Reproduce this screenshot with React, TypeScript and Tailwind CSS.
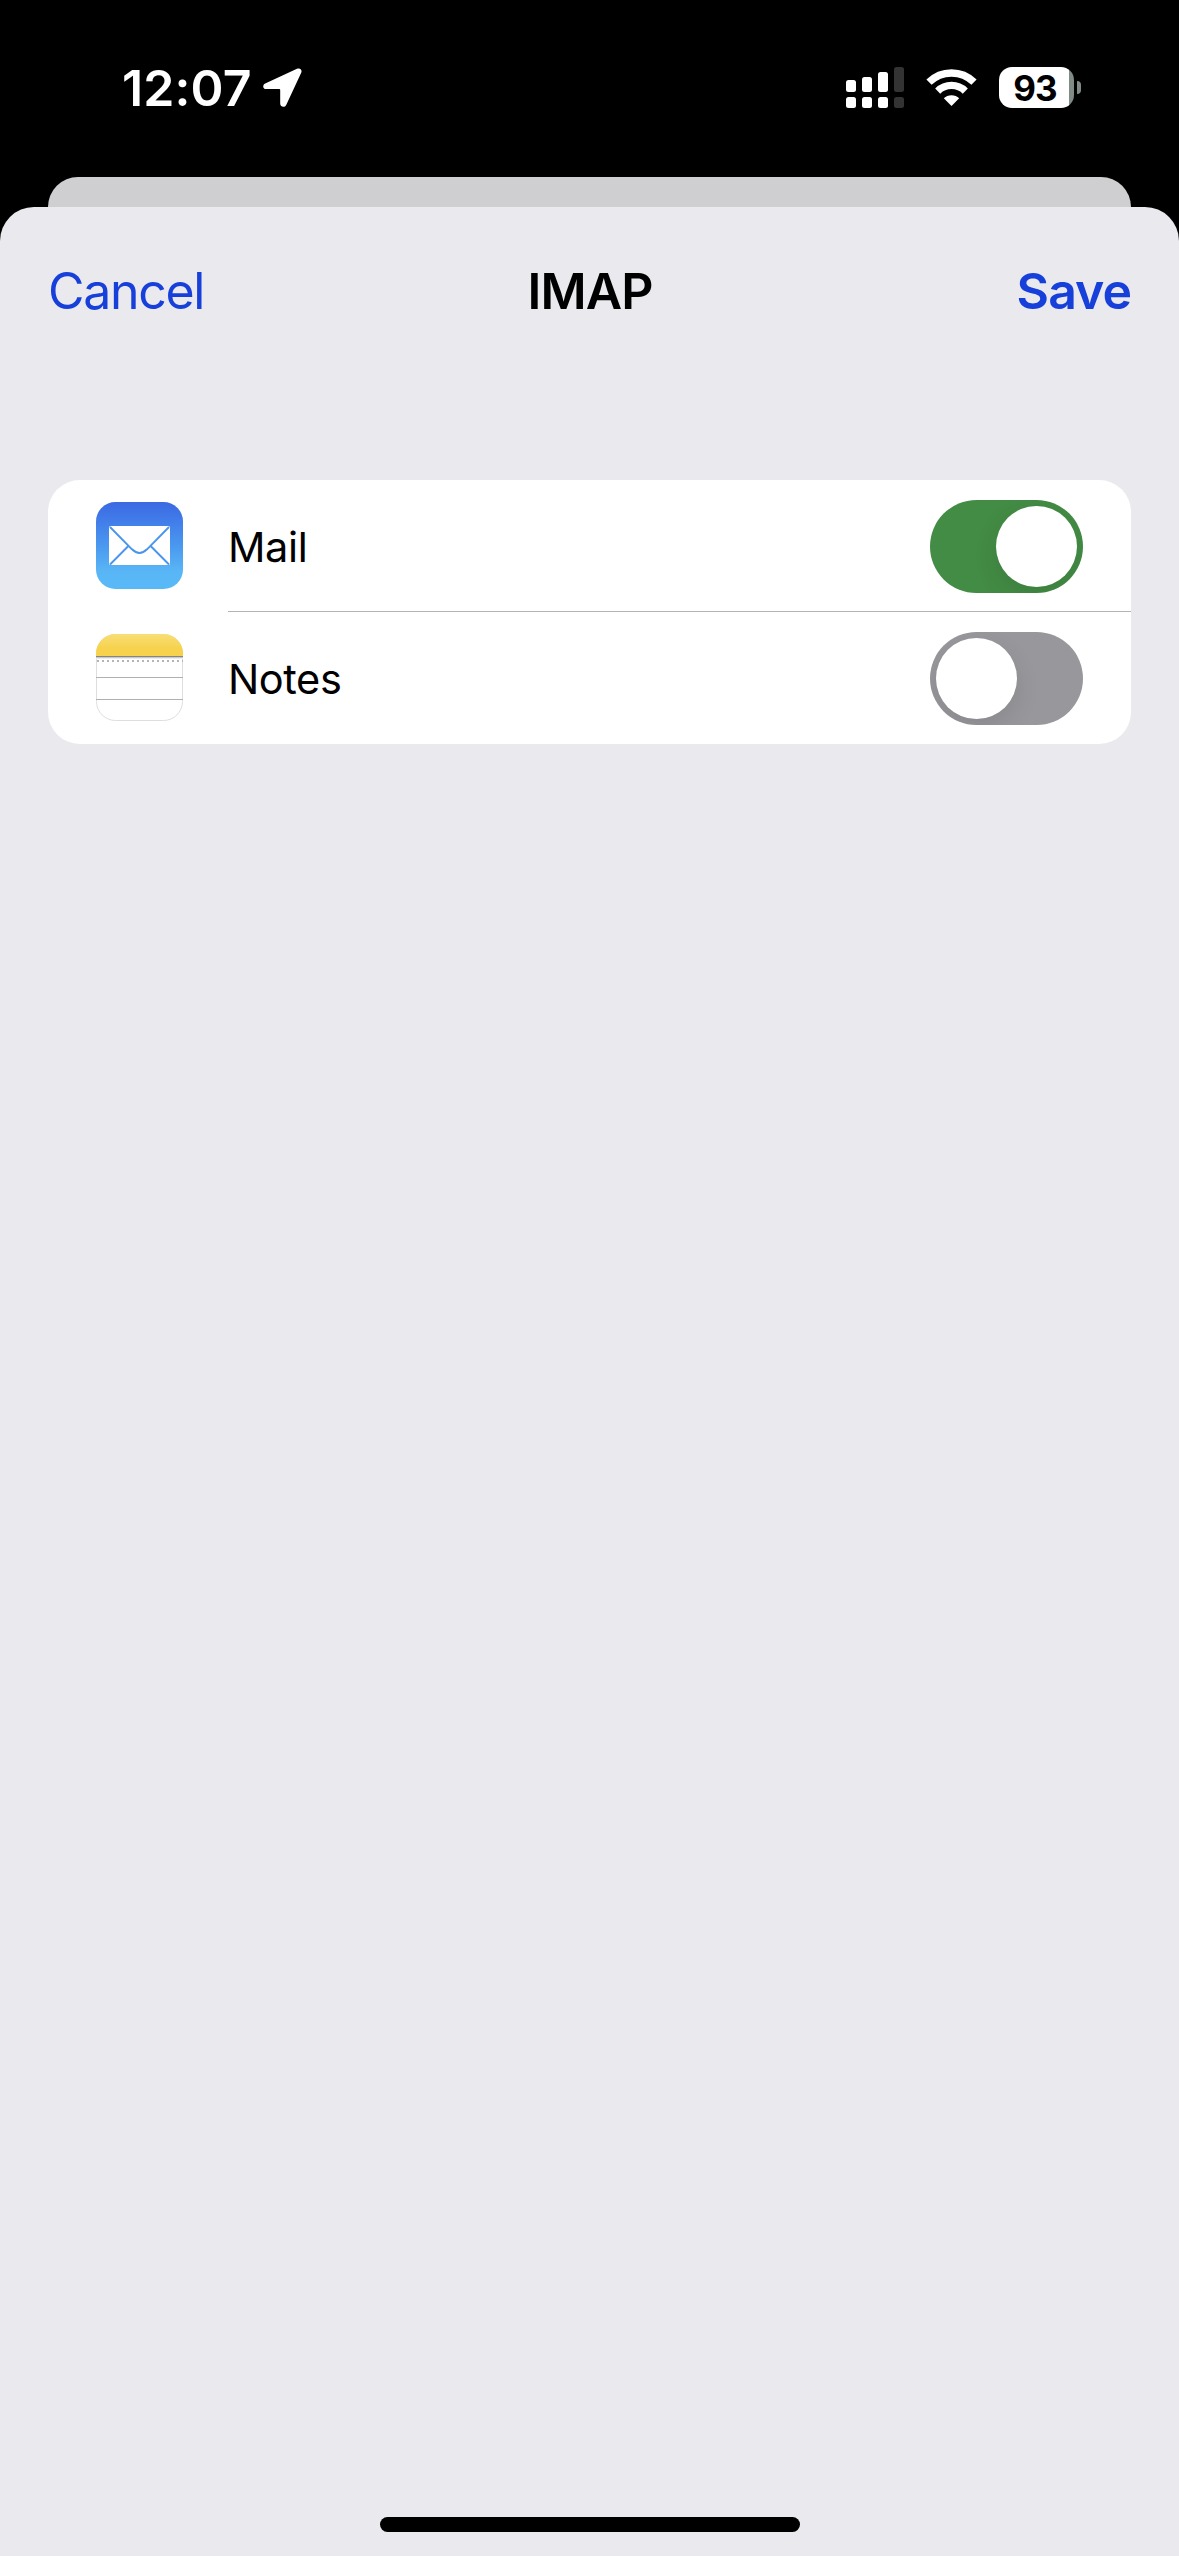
import { useState } from 'react'
import type { ReactNode } from 'react'

function LocationArrow() {
  return (
    <svg width="39" height="39" viewBox="0 0 39 39" className="ml-[11px] shrink-0">
      <path
        d="M34 .8 2.2 15.4C-.8 16.9-.3 21 3 21H16.2Q17.2 21 17.2 22V35.5C17.2 39 21.7 40 23.2 36.9L38.2 4.8C39.5 1.8 37 -.5 34 .8Z"
        fill="white"
      />
    </svg>
  )
}

function SignalBars() {
  return (
    <svg width="58" height="41" viewBox="0 0 58 41" fill="white" className="shrink-0">
      <rect x="0" y="13" width="10" height="12" rx="2.5" />
      <rect x="16" y="10" width="10" height="15" rx="2.5" />
      <rect x="32" y="5" width="10" height="20" rx="2.5" />
      <rect x="48" y="0" width="10" height="25" rx="2.5" fill="#333333" />
      <rect x="0" y="30" width="10" height="11" rx="2.5" />
      <rect x="16" y="30" width="10" height="11" rx="2.5" />
      <rect x="32" y="30" width="10" height="11" rx="2.5" />
      <rect x="48" y="30" width="10" height="11" rx="2.5" fill="#333333" />
    </svg>
  )
}

function WifiIcon() {
  return (
    <svg width="51" height="37" viewBox="0 0 51 37" className="ml-5.5 shrink-0">
      <path d="M3 13.2A32 32 0 0 1 48 13.2" fill="none" stroke="white" strokeWidth="7.4" />
      <path d="M11.7 22.1A19.7 19.7 0 0 1 39.3 22.1" fill="none" stroke="white" strokeWidth="7.2" />
      <path d="M25.5 37 17.8 29.3A11 11 0 0 1 33.2 29.3Z" fill="white" />
    </svg>
  )
}

function Battery({ level }: { level: number }) {
  return (
    <div className="ml-5.5 flex shrink-0 items-center">
      <div className="flex h-[41px] w-[75px] items-center justify-center overflow-hidden rounded-[13px] bg-[linear-gradient(90deg,#fff_70px,#818b85_70px)] pt-px pr-[3px] text-[35px] font-bold tracking-[-1px] text-black">
        {level}
      </div>
      <div className="ml-[3px] h-[13px] w-1 rounded-r-full bg-[#818b85]" />
    </div>
  )
}

function StatusBar() {
  return (
    <div className="flex h-[175px] items-center justify-between pr-[98px] pl-[122px]">
      <div className="flex items-center">
        <span className="text-[50px] font-semibold tracking-[0.1px] text-white">12:07</span>
        <LocationArrow />
      </div>
      <div className="flex items-center">
        <SignalBars />
        <WifiIcon />
        <Battery level={93} />
      </div>
    </div>
  )
}

function MailIcon() {
  return (
    <svg width="87" height="87" viewBox="0 0 87 87" className="shrink-0">
      <defs>
        <linearGradient id="mail-bg" x1="0" y1="0" x2="0" y2="1">
          <stop offset="0" stopColor="#3b69e2" />
          <stop offset=".2" stopColor="#417be9" />
          <stop offset=".5" stopColor="#4a98ef" />
          <stop offset=".8" stopColor="#59b6f6" />
          <stop offset="1" stopColor="#59b9f7" />
        </linearGradient>
      </defs>
      <rect width="87" height="87" rx="19.5" fill="url(#mail-bg)" />
      <rect x="13" y="24" width="61" height="39" rx="1.5" fill="white" />
      <g fill="none" stroke="#4995ee" strokeWidth="1.9">
        <path d="M14 25 36 47.3Q43.5 54.5 51 47.3L73 25" />
        <path d="M14 62.5 32.4 44M73 62.5 54.6 44" />
      </g>
    </svg>
  )
}

function NotesIcon() {
  return (
    <svg width="87" height="87" viewBox="0 0 87 87" className="shrink-0">
      <defs>
        <linearGradient id="notes-top" x1="0" y1="0" x2="0" y2="1">
          <stop offset="0" stopColor="#f8de75" />
          <stop offset=".65" stopColor="#f6d24d" />
        </linearGradient>
        <clipPath id="notes-clip">
          <rect width="87" height="87" rx="19.5" />
        </clipPath>
      </defs>
      <rect x=".5" y=".5" width="86" height="86" rx="19" fill="white" stroke="#dededf" />
      <g clipPath="url(#notes-clip)">
        <rect width="87" height="22" fill="url(#notes-top)" />
        <rect y="22" width="87" height="1" fill="#858585" />
        <rect y="23" width="87" height="1" fill="#c9c9c9" />
        <rect y="24" width="87" height="1" fill="#ececec" />
        <path d="M1 27H87" stroke="#b4b4b4" strokeWidth="2" strokeDasharray="2 3" />
        <rect y="43" width="87" height="1" fill="#b0b0b0" />
        <rect y="65" width="87" height="1" fill="#b0b0b0" />
      </g>
    </svg>
  )
}

function Toggle({ label, on, onChange }: { label: string; on: boolean; onChange: () => void }) {
  return (
    <button
      role="switch"
      aria-checked={on}
      aria-label={label}
      onClick={onChange}
      className={`flex h-[93px] w-[153px] shrink-0 cursor-pointer items-center overflow-hidden rounded-full p-1.5 ${
        on ? 'justify-end bg-[#438c45]' : 'justify-start bg-[#98979b]'
      }`}
    >
      <span className="size-[81px] rounded-full bg-white shadow-[0_9px_24px_rgba(0,0,0,0.1)]" />
    </button>
  )
}

type AccountRowProps = {
  icon: ReactNode
  label: string
  on: boolean
  divider?: boolean
  onChange: () => void
}

function AccountRow({ icon, label, on, divider, onChange }: AccountRowProps) {
  return (
    <li className="flex h-[132px] pl-12">
      <div className="flex items-center pb-px">{icon}</div>
      <div
        className={`ml-[45px] flex flex-1 items-center justify-between pr-12 ${
          divider ? 'border-b border-[#b2b3b3] pt-0.5' : 'pb-px pt-0.5'
        }`}
      >
        <span className="pt-0.5 text-[41.5px] tracking-[-0.4px] text-black">{label}</span>
        <Toggle label={label} on={on} onChange={onChange} />
      </div>
    </li>
  )
}

export default function App() {
  const [mail, setMail] = useState(true)
  const [notes, setNotes] = useState(false)

  return (
    <div className="flex h-[2556px] w-[1179px] flex-col bg-black font-['Inter',sans-serif] leading-none">
      <StatusBar />

      {/* Edge of the sheet underneath */}
      <div className="mx-12 mt-0.5 h-[30px] rounded-t-[30px] bg-[#cfced1]" />

      <div className="flex flex-1 flex-col rounded-t-[34px] bg-[#eae9ee]">
        <header className="grid h-[168px] grid-cols-3 items-center px-12">
          <button className="cursor-pointer justify-self-start text-[50px] tracking-[-1.3px] text-[#173fda]">
            Cancel
          </button>
          <h1 className="justify-self-center pl-px text-[50px] font-semibold tracking-[-0.9px] text-black">IMAP</h1>
          <button className="cursor-pointer justify-self-end text-[50px] font-semibold tracking-[-1px] text-[#173fda]">
            Save
          </button>
        </header>

        <ul className="mx-12 mt-[105px] overflow-hidden rounded-[32px] bg-white">
          <AccountRow icon={<MailIcon />} label="Mail" on={mail} divider onChange={() => setMail(!mail)} />
          <AccountRow icon={<NotesIcon />} label="Notes" on={notes} onChange={() => setNotes(!notes)} />
        </ul>

        <div className="mx-auto mt-auto mb-6 h-[15px] w-[420px] rounded-full bg-black" />
      </div>
    </div>
  )
}
